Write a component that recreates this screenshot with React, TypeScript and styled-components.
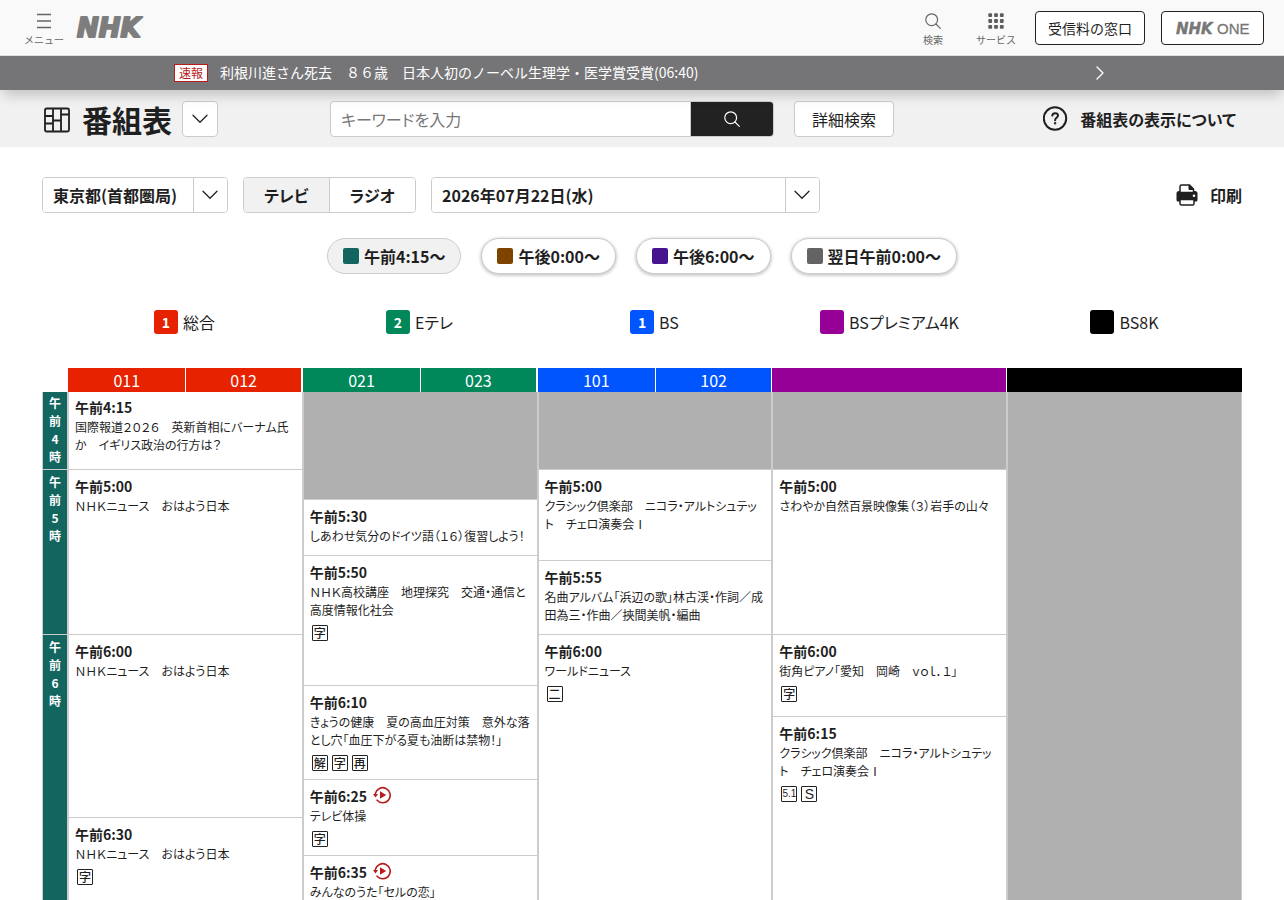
import React from "react";
import styled, { createGlobalStyle } from "styled-components";

const ink = "#1f1f1f";
const line = "#ccc";

const GlobalStyle = createGlobalStyle`
  *, *::before, *::after { box-sizing: border-box; }
  body {
    margin: 0;
    background: #fff;
    color: ${ink};
    font-family: "Noto Sans CJK JP", "Noto Sans", sans-serif;
    font-size: 16px;
    line-height: 24px;
  }
  button, input, select { font: inherit; color: inherit; font-feature-settings: inherit; }
  button { cursor: pointer; }
  a { color: inherit; text-decoration: none; }
  svg { display: block; flex: none; }
`;

const SiteTop = styled.div`
  position: sticky;
  top: 0;
  z-index: 2;
  box-shadow: 0 8px 12px -3px rgba(0, 0, 0, 0.2);
`;

const SiteHeader = styled.header`
  display: flex;
  align-items: center;
  height: 56px;
  padding: 0 20px 0 24px;
  background: #f9f9f9;
  border-bottom: 1px solid #dedede;
`;

const HeaderTool = styled.button`
  display: flex;
  flex-direction: column;
  align-items: center;
  gap: 4px;
  padding: 4px 0 0;
  border: 0;
  background: none;
  color: #666;
  font-size: 10px;
  line-height: 14px;
`;

const HomeLink = styled.a`
  margin-left: 11px;
`;

const HeaderRight = styled.div`
  display: flex;
  align-items: center;
  gap: 33px;
  margin-left: auto;
`;

const HeaderButtons = styled.div`
  display: flex;
  gap: 16px;
  margin-left: -14px;
`;

const HeaderLink = styled.a`
  display: flex;
  align-items: center;
  justify-content: center;
  height: 34px;
  padding: 0 12px;
  border: 1px solid #222;
  border-radius: 4px;
  background: #fff;
  font-size: 14px;
`;

const NewsBar = styled.div`
  background: #757577;
  color: #fff;
`;

const NewsInner = styled.a`
  display: flex;
  align-items: center;
  gap: 12px;
  max-width: 936px;
  height: 34px;
  margin: 0 auto;
  padding-right: 5px;
  font-size: 14px;
  line-height: 20px;
  svg { margin-left: auto; }
`;

const NewsTag = styled.span`
  padding: 0 4px;
  border: 1px solid #b71c1c;
  background: #fff;
  color: #b71c1c;
  font-size: 12px;
  line-height: 16px;
`;

const NewsText = styled.span`
  padding-bottom: 2px;
`;

const TitleBar = styled.div`
  display: grid;
  grid-template-columns: 288px minmax(0, 564px) 1fr;
  align-items: center;
  height: 57px;
  padding: 0 42px;
  background: #f1f1f1;
  font-feature-settings: "palt";
`;

const TitleGroup = styled.div`
  display: flex;
  align-items: center;
`;

const PageTitle = styled.h1`
  margin: 0 10px 0 12px;
  font-size: 30px;
  line-height: 36px;
`;

const PlainButton = styled.button<{ $wide?: boolean }>`
  display: flex;
  align-items: center;
  justify-content: center;
  flex: none;
  width: ${(p) => (p.$wide ? 100 : 36)}px;
  height: 36px;
  padding: 0;
  border: 1px solid ${line};
  border-radius: 4px;
  background: #fff;
`;

const SearchGroup = styled.form`
  display: flex;
  gap: 20px;
`;

const SearchBox = styled.div`
  display: flex;
  flex: 1;
  min-width: 0;
  height: 36px;
  border: 1px solid ${line};
  border-radius: 4px;
  overflow: hidden;
  background: #fff;
`;

const SearchInput = styled.input`
  flex: 1;
  min-width: 0;
  padding: 0 10px;
  border: 0;
  outline: 0;
  background: none;
  &::placeholder { color: #777; opacity: 1; }
`;

const SearchSubmit = styled.button`
  display: flex;
  align-items: center;
  justify-content: center;
  width: 83px;
  border: 0;
  border-left: 1px solid ${line};
  background: #222;
  color: #fff;
`;

const TextLink = styled.a<{ $inset?: boolean }>`
  display: flex;
  align-items: center;
  justify-self: end;
  gap: 12px;
  margin-left: auto;
  padding-right: ${(p) => (p.$inset ? 6 : 0)}px;
  font-weight: 700;
`;

const Main = styled.main`
  padding: 30px 42px 0;
  font-feature-settings: "palt";
`;

const Controls = styled.div`
  display: flex;
  align-items: center;
  gap: 15px;
`;

const SelectBox = styled.label<{ $width: number }>`
  display: grid;
  grid-template-columns: 1fr;
  width: ${(p) => p.$width}px;
  height: 36px;
  border: 1px solid ${line};
  border-radius: 4px;
  overflow: hidden;
`;

const SelectInput = styled.select`
  grid-area: 1 / 1;
  appearance: none;
  padding: 0 40px 0 10px;
  border: 0;
  background: #fff;
  font-weight: 700;
`;

const SelectArrow = styled.span`
  grid-area: 1 / 1;
  justify-self: end;
  display: flex;
  align-items: center;
  justify-content: center;
  width: 34px;
  padding-right: 2px;
  border-left: 1px solid ${line};
  pointer-events: none;
`;

const Segments = styled.div`
  display: flex;
  width: 173px;
  height: 36px;
  border: 1px solid ${line};
  border-radius: 4px;
  overflow: hidden;
`;

const Segment = styled.button<{ $active?: boolean }>`
  flex: 1 1 auto;
  padding: 0 20px;
  border: 0;
  background: ${(p) => (p.$active ? "#f1f1f1" : "#fff")};
  font-weight: 700;
  & + & { border-left: 1px solid ${line}; }
`;

const Pills = styled.div`
  display: flex;
  justify-content: center;
  gap: 20px;
  margin-top: 25px;
`;

const Pill = styled.button<{ $active?: boolean }>`
  display: flex;
  align-items: center;
  gap: 5px;
  height: 36px;
  padding: 0 15px;
  border: 1px solid ${line};
  border-radius: 18px;
  background: ${(p) => (p.$active ? "#f1f1f1" : "#fff")};
  box-shadow: ${(p) => (p.$active ? "none" : "0 1px 3px 1px rgba(0, 0, 0, 0.2)")};
  font-weight: 700;
`;

const Swatch = styled.span<{ $color: string }>`
  width: 16px;
  height: 16px;
  border-radius: 2px;
  background: ${(p) => p.$color};
`;

const Legend = styled.ul`
  display: flex;
  margin: 36px 0 34px;
  padding: 0 0 0 25px;
  list-style: none;
`;

const LegendItem = styled.li`
  display: flex;
  flex: 1 1 0;
  align-items: center;
  justify-content: center;
  gap: 5px;
`;

const ChannelMark = styled.span<{ $color: string }>`
  width: 24px;
  height: 24px;
  border-radius: 3px;
  background: ${(p) => p.$color};
  color: #fff;
  font-size: 14px;
  font-weight: 700;
  line-height: 24px;
  text-align: center;
`;

const Guide = styled.table`
  width: 100%;
  table-layout: fixed;
  border-collapse: separate;
  border-spacing: 0;
`;

const HourCol = styled.col`
  width: 26px;
`;

const GuideRow = styled.tr<{ $height: number }>`
  height: ${(p) => p.$height}px;
`;

const CornerCell = styled.td`
  padding: 0;
`;

const ChannelHead = styled.th<{ $color: string; $split?: boolean; $gap?: number }>`
  height: 24px;
  padding: 0;
  border-left: ${(p) => (p.$split ? "1px solid #fff" : "0")};
  border-right: ${(p) => p.$gap || 0}px solid #fff;
  background: ${(p) => p.$color};
  color: #fff;
  font-weight: 400;
  line-height: 24px;
`;

const HourCell = styled.th`
  padding: 3px 5px 0;
  border: solid ${line};
  border-width: 0 1px 1px;
  background: #12665f;
  color: #fff;
  font-size: 12px;
  font-weight: 700;
  line-height: 18px;
  text-align: center;
  vertical-align: top;
  word-break: break-all;
  tr:first-child > & { padding-top: 2px; }
`;

const ProgramCell = styled.td`
  padding: 6px 6px 0;
  border: solid ${line};
  border-width: 0 1px 1px;
  vertical-align: top;
  tr:first-child > & { padding-top: 5px; }
`;

const EmptyCell = styled.td`
  padding: 0;
  border: solid ${line};
  border-width: 0 1px 1px;
  background: #b0b0b0;
`;

const StartTime = styled.div`
  display: flex;
  gap: 6px;
  margin-bottom: 1px;
  font-size: 14px;
  font-weight: 700;
  line-height: 20px;
`;

const ProgramTitle = styled.a`
  display: block;
  font-size: 12px;
  line-height: 18px;
`;

const Marks = styled.div`
  display: flex;
  gap: 4px;
  padding: 6px 2px 0;
`;

const Mark = styled.span<{ $latin?: boolean; $size: number }>`
  width: 16px;
  height: 16px;
  border: 1px solid #222;
  border-radius: 1px;
  font-family: ${(p) => (p.$latin ? '"Liberation Sans", sans-serif' : "inherit")};
  font-size: ${(p) => p.$size}px;
  font-weight: ${(p) => (p.$latin ? 400 : 500)};
  line-height: 14px;
  text-align: center;
  white-space: nowrap;
`;

const BrandText = styled.text`
  font-family: "DejaVu Sans", sans-serif;
  font-style: oblique;
  font-weight: 700;
`;

const Brand = () => (
  <svg width="76" height="38" viewBox="0 0 76 38" role="img" aria-label="NHK">
    <BrandText x="2" y="28" fontSize="26" fill="#7d7d7d" stroke="#7d7d7d" strokeWidth="2" strokeLinejoin="round">
      NHK
    </BrandText>
  </svg>
);

const BrandOne = () => (
  <svg width="77" height="24" viewBox="0 0 77 24" role="img" aria-label="NHK ONE">
    <BrandText x="2" y="18" fontSize="15" fill="#777" stroke="#777" strokeWidth="0.4" strokeLinejoin="round">
      NHK
    </BrandText>
    <text x="43" y="18" fontSize="15" fill="#777" stroke="#777" strokeWidth="0.3" fontFamily="Liberation Sans, sans-serif">
      ONE
    </text>
  </svg>
);

const MenuIcon = () => (
  <svg width="14" height="16" viewBox="0 0 14 16" stroke="#666" strokeWidth="1.4">
    <path d="M0 1.5h14M0 8h14M0 14.5h14" />
  </svg>
);

const SearchIcon = () => (
  <svg width="16" height="16" viewBox="0 0 16 16" fill="none" stroke="currentColor" strokeWidth="1.2" strokeLinecap="round">
    <circle cx="6.7" cy="6.7" r="5.9" />
    <path d="M11 11l4.3 4.3" />
  </svg>
);

const GridIcon = () => (
  <svg width="16" height="16" viewBox="0 0 16 16" fill="#5c5c5c">
    {[0, 5.8, 11.6].map((y) =>
      [0, 5.8, 11.6].map((x) => <rect key={`${x}-${y}`} x={x + 0.3} y={y + 0.3} width="3.8" height="3.8" rx="0.8" />)
    )}
  </svg>
);

const Chevron = () => (
  <svg width="16" height="10" viewBox="0 0 16 10" fill="none" stroke="#222" strokeWidth="1.3" strokeLinecap="round" strokeLinejoin="round">
    <path d="M1 1.2l7 7 7-7" />
  </svg>
);

const ChevronRight = () => (
  <svg width="10" height="16" viewBox="0 0 10 16" fill="none" stroke="#fff" strokeWidth="1.4" strokeLinecap="round" strokeLinejoin="round">
    <path d="M2 2l6 6-6 6" />
  </svg>
);

const ScheduleIcon = () => (
  <svg width="28" height="28" viewBox="0 0 28 28" fill="none" stroke={ink} strokeWidth="1.8">
    <rect x="3" y="3.5" width="24" height="23" rx="1.5" />
    <path d="M11 3.5v23M19 3.5v23M3 11h8M3 18.5h8M11 15.5h8M19 9.5h8" />
  </svg>
);

const HelpIcon = () => (
  <svg width="25" height="25" viewBox="0 0 25 25" fill="none" stroke={ink} strokeWidth="2" strokeLinecap="round">
    <circle cx="12" cy="12.5" r="11.2" />
    <path d="M9.3 9.6c.2-1.6 1.3-2.4 2.8-2.4 1.7 0 2.9 1 2.9 2.4 0 2.2-2.9 2.3-2.9 4.6" />
    <circle cx="12.1" cy="17.3" r=".5" strokeWidth="1.5" />
  </svg>
);

const PrintIcon = () => (
  <svg width="22" height="22" viewBox="0 0 22 22">
    <path d="M.5 9.5A2.5 2.5 0 0 1 3 7h16a2.5 2.5 0 0 1 2.5 2.5V16a1.5 1.5 0 0 1-1.5 1.5H2A1.5 1.5 0 0 1 .5 16z" fill={ink} />
    <path d="M4 8.5v-6A1.5 1.5 0 0 1 5.5 1h8l4 4v3.5z" fill="#fff" stroke={ink} strokeWidth="1.5" strokeLinejoin="round" />
    <path d="M13 1v4.5h4.5z" fill={ink} stroke={ink} strokeLinejoin="round" />
    <path d="M4 15.5h14v4a1.5 1.5 0 0 1-1.5 1.5h-11A1.5 1.5 0 0 1 4 19.5z" fill="#fff" stroke={ink} strokeWidth="1.5" />
    <circle cx="18" cy="11.8" r="1.3" fill="#fff" />
  </svg>
);

const ReplayIcon = () => (
  <svg width="18" height="18" viewBox="0 0 18 18" fill="none">
    <path d="M2.4 7.4a7.5 7.5 0 1 1 1.7 6.8" stroke="#b71c1c" strokeWidth="1.6" strokeLinecap="round" />
    <path d="M0 8h5l-2.5 3.5zM7 5.2v7.6l6.2-3.8z" fill="#b71c1c" />
  </svg>
);

type Program = { time: string; title: string; marks?: string[]; replay?: boolean; span: number };
type Slot =
  | ({ kind: "program" } & Program)
  | { kind: "empty"; span: number }
  | { kind: "hour"; hour: string; span: number };

const hour = (n: string, span: number): Slot => ({ kind: "hour", hour: n, span });
const empty = (span: number): Slot => ({ kind: "empty", span });
const show = (time: string, title: string, span: number, marks?: string[], replay?: boolean): Slot => ({
  kind: "program",
  time,
  title,
  span,
  marks,
  replay,
});

const classic = "クラシック倶楽部　ニコラ・アルトシュテット　チェロ演奏会Ⅰ";

const rows: { height: number; slots: Slot[] }[] = [
  {
    height: 78,
    slots: [
      hour("午前4時", 1),
      show("4:15", "国際報道２０２６　英新首相にバーナム氏か　イギリス政治の行方は？", 1),
      empty(2),
      empty(1),
      empty(1),
      empty(11),
    ],
  },
  {
    height: 30,
    slots: [
      hour("午前5時", 4),
      show("5:00", "ＮＨＫニュース　おはよう日本", 4),
      show("5:00", classic, 3),
      show("5:00", "さわやか自然百景映像集（３）岩手の山々", 4),
    ],
  },
  { height: 56, slots: [show("5:30", "しあわせ気分のドイツ語（１６）復習しよう！", 1)] },
  { height: 5, slots: [show("5:50", "ＮＨＫ高校講座　地理探究　交通・通信と高度情報化社会", 3, ["字"])] },
  { height: 74, slots: [show("5:55", "名曲アルバム「浜辺の歌」林古渓・作詞／成田為三・作曲／挾間美帆・編曲", 1)] },
  {
    height: 51,
    slots: [
      hour("午前6時", 6),
      show("6:00", "ＮＨＫニュース　おはよう日本", 4),
      show("6:00", "ワールドニュース", 6, ["二"]),
      show("6:00", "街角ピアノ「愛知　岡崎　ｖｏｌ．１」", 2, ["字"]),
    ],
  },
  { height: 31, slots: [show("6:10", "きょうの健康　夏の高血圧対策　意外な落とし穴「血圧下がる夏も油断は禁物！」", 2, ["解", "字", "再"])] },
  { height: 63, slots: [show("6:15", classic, 4, ["5.1", "S"])] },
  { height: 38, slots: [show("6:25", "テレビ体操", 2, ["字"], true)] },
  { height: 38, slots: [show("6:30", "ＮＨＫニュース　おはよう日本", 2, ["字"])] },
  { height: 76, slots: [show("6:35", "みんなのうた「セルの恋」", 1, undefined, true)] },
];

const heads = [
  { color: "#e62200", numbers: ["011", "012"], gap: 2 },
  { color: "#00875a", numbers: ["021", "023"], gap: 2 },
  { color: "#0055ff", numbers: ["101", "102"], gap: 1 },
  { color: "#960096", numbers: [], gap: 1 },
  { color: "#000", numbers: [], gap: 0 },
];

const channels = [
  { color: "#e62200", mark: "1", name: "総合" },
  { color: "#00875a", mark: "2", name: "Eテレ" },
  { color: "#0055ff", mark: "1", name: "BS" },
  { color: "#960096", mark: "", name: "BSプレミアム4K" },
  { color: "#000", mark: "", name: "BS8K" },
];

const periods = [
  { color: "#12665f", label: "午前4:15〜" },
  { color: "#7f4300", label: "午後0:00〜" },
  { color: "#46148c", label: "午後6:00〜" },
  { color: "#646464", label: "翌日午前0:00〜" },
];

const markSizes: Record<string, number> = { "5.1": 10, S: 14 };

const SlotCell = ({ slot }: { slot: Slot }) => {
  if (slot.kind === "hour") return <HourCell scope="row" rowSpan={slot.span}>{slot.hour}</HourCell>;
  if (slot.kind === "empty") return <EmptyCell colSpan={2} rowSpan={slot.span} />;
  return (
    <ProgramCell colSpan={2} rowSpan={slot.span}>
      <StartTime>
        午前{slot.time}
        {slot.replay && <ReplayIcon />}
      </StartTime>
      <ProgramTitle href="#">{slot.title}</ProgramTitle>
      {slot.marks && (
        <Marks>
          {slot.marks.map((m) => (
            <Mark key={m} $latin={m in markSizes} $size={markSizes[m] || 12}>{m}</Mark>
          ))}
        </Marks>
      )}
    </ProgramCell>
  );
};

export default function App() {
  return (
    <>
      <GlobalStyle />
      <SiteTop>
        <SiteHeader>
          <HeaderTool type="button"><MenuIcon />メニュー</HeaderTool>
          <HomeLink href="#"><Brand /></HomeLink>
          <HeaderRight>
            <HeaderTool type="button"><SearchIcon />検索</HeaderTool>
            <HeaderTool type="button"><GridIcon />サービス</HeaderTool>
            <HeaderButtons>
              <HeaderLink href="#">受信料の窓口</HeaderLink>
              <HeaderLink href="#"><BrandOne /></HeaderLink>
            </HeaderButtons>
          </HeaderRight>
        </SiteHeader>
        <NewsBar>
          <NewsInner href="#">
            <NewsTag>速報</NewsTag>
            <NewsText>利根川進さん死去　８６歳　日本人初のノーベル生理学・医学賞受賞(06:40)</NewsText>
            <ChevronRight />
          </NewsInner>
        </NewsBar>
      </SiteTop>

      <TitleBar>
        <TitleGroup>
          <ScheduleIcon />
          <PageTitle>番組表</PageTitle>
          <PlainButton type="button" aria-label="番組表メニュー"><Chevron /></PlainButton>
        </TitleGroup>
        <SearchGroup onSubmit={(e) => e.preventDefault()}>
          <SearchBox>
            <SearchInput type="text" placeholder="キーワードを入力" aria-label="キーワード" />
            <SearchSubmit type="submit" aria-label="検索"><SearchIcon /></SearchSubmit>
          </SearchBox>
          <PlainButton type="button" $wide>詳細検索</PlainButton>
        </SearchGroup>
        <TextLink href="#" $inset><HelpIcon />番組表の表示について</TextLink>
      </TitleBar>

      <Main>
        <Controls>
          <SelectBox $width={186}>
            <SelectInput aria-label="地域"><option>東京都(首都圏局)</option></SelectInput>
            <SelectArrow><Chevron /></SelectArrow>
          </SelectBox>
          <Segments>
            <Segment type="button" $active>テレビ</Segment>
            <Segment type="button">ラジオ</Segment>
          </Segments>
          <SelectBox $width={389}>
            <SelectInput aria-label="日付"><option>2026年07月22日(水)</option></SelectInput>
            <SelectArrow><Chevron /></SelectArrow>
          </SelectBox>
          <TextLink href="#"><PrintIcon />印刷</TextLink>
        </Controls>

        <Pills>
          {periods.map((p, i) => (
            <Pill key={p.label} type="button" $active={i === 0}>
              <Swatch $color={p.color} />
              {p.label}
            </Pill>
          ))}
        </Pills>

        <Legend>
          {channels.map((c) => (
            <LegendItem key={c.name}>
              <ChannelMark $color={c.color}>{c.mark}</ChannelMark>
              {c.name}
            </LegendItem>
          ))}
        </Legend>

        <Guide>
          <colgroup>
            <HourCol />
            <col span={10} />
          </colgroup>
          <thead>
            <tr>
              <CornerCell />
              {heads.map((h) =>
                h.numbers.length ? (
                  h.numbers.map((n, i) => (
                    <ChannelHead key={n} scope="col" $color={h.color} $split={i === 1} $gap={i === 1 ? h.gap : 0}>{n}</ChannelHead>
                  ))
                ) : (
                  <ChannelHead key={h.color} colSpan={2} $color={h.color} $gap={h.gap} />
                )
              )}
            </tr>
          </thead>
          <tbody>
            {rows.map((r, i) => (
              <GuideRow key={i} $height={r.height}>
                {r.slots.map((s, j) => <SlotCell key={j} slot={s} />)}
              </GuideRow>
            ))}
          </tbody>
        </Guide>
      </Main>
    </>
  );
}
